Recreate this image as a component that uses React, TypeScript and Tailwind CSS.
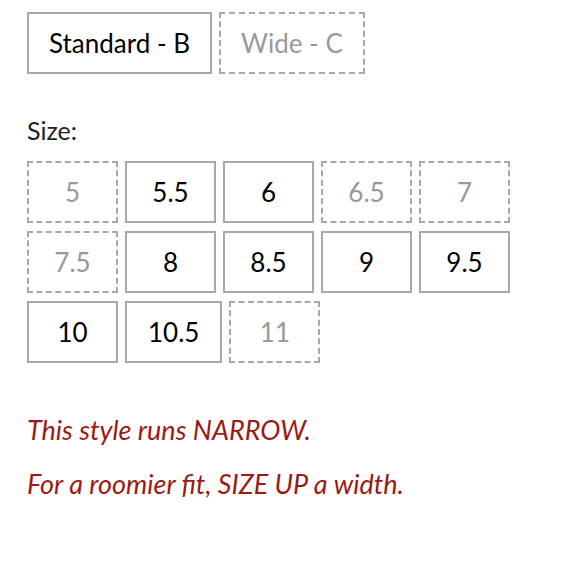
const widths = [
  { label: "Standard - B", available: true },
  { label: "Wide - C", available: false },
];

const sizes = [
  { label: "5", available: false },
  { label: "5.5", available: true },
  { label: "6", available: true },
  { label: "6.5", available: false },
  { label: "7", available: false },
  { label: "7.5", available: false },
  { label: "8", available: true },
  { label: "8.5", available: true },
  { label: "9", available: true },
  { label: "9.5", available: true },
  { label: "10", available: true },
  { label: "10.5", available: true },
  { label: "11", available: false },
];

function Option({ label, available, className }: { label: string; available: boolean; className: string }) {
  return (
    <button
      className={
        "flex items-center justify-center border-2 bg-white " +
        (available ? "border-solid border-[#a8a8a8] text-black" : "border-dashed border-[#a8a8a8] text-[#999999]") +
        " " +
        className
      }
    >
      {label}
    </button>
  );
}

export default function App() {
  return (
    <div className="min-h-[580px] bg-white pl-[27px] pt-[12px]" style={{ fontFamily: "Lato, 'Open Sans', sans-serif" }}>
      {/* ширина */}
      <div className="flex gap-[7px]">
        {widths.map((w) => (
          <Option key={w.label} {...w} className="h-[62px] px-[20px] text-[26px]" />
        ))}
      </div>

      <p className="mt-[44px] text-[25px] leading-none text-[#222]">Size:</p>

      <div className="mt-[18px] flex w-[490px] flex-wrap gap-x-[7px] gap-y-[8px]">
        {sizes.map((s) => (
          <Option key={s.label} {...s} className="h-[62px] min-w-[91px] px-[21px] text-[26px]" />
        ))}
      </div>

      {/* примечание */}
      <div className="mt-[52px] flex flex-col gap-[24px] text-[27px] italic leading-[30px] text-[#9b1a14]">
        <p>This style runs NARROW.</p>
        <p>For a roomier fit, SIZE UP a width.</p>
      </div>
    </div>
  );
}
